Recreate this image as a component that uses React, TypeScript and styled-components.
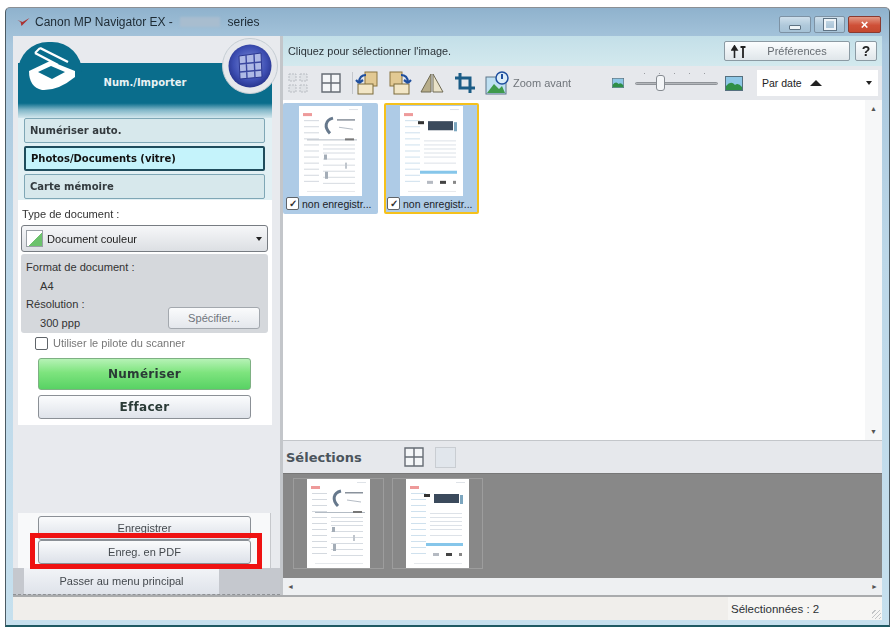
import React from 'react';
import styled, { createGlobalStyle } from 'styled-components';

const GlobalStyle = createGlobalStyle`
  html, body { margin: 0; padding: 0; background: #fff; }
  body { width: 895px; height: 631px; overflow: hidden; font-family: "Liberation Sans", Arial, sans-serif; }
`;

const PageIcon: React.FC<{ kind: 'a' | 'b' }> = ({ kind }) => (
  <svg width="100%" height="100%" viewBox="0 0 63 89" preserveAspectRatio="none">
    <rect width="63" height="89" fill="#fff" />
    <rect x="4" y="7" width="9" height="3" fill="#ee9a9a" />
    <rect x="50" y="3" width="9" height="1" fill="#dfe3e8" />
    {[14, 20, 26, 32, 38, 44, 50, 56, 62, 68, 74].map((y) => (
      <rect key={y} x="5" y={y} width="15" height="1" fill={kind === 'a' ? '#d4d9df' : '#cfe1ee'} />
    ))}
    {kind === 'a' ? (
      <>
        <path d="M34 12 C26 14 25 21 31 27" stroke="#66788c" strokeWidth="3" fill="none" />
        <rect x="38" y="13" width="18" height="1.5" fill="#8a929c" />
        <path d="M40 21 L54 23" stroke="#b5bcc5" strokeWidth="1" />
        <rect x="8" y="33" width="50" height="1" fill="#b3bbc4" />
        <rect x="46" y="32" width="9" height="2" fill="#777" />
        {[38, 42, 46, 52, 58, 64, 70, 76].map((y) => (
          <rect key={y} x="24" y={y} width="32" height="1" fill="#d7dce2" />
        ))}
        <rect x="25" y="48" width="3" height="5" fill="#a4adb7" />
        <rect x="26" y="65" width="3" height="7" fill="#a4adb7" />
        <rect x="46" y="56" width="2" height="6" fill="#c0c6cd" />
      </>
    ) : (
      <>
        <rect x="18" y="15" width="6" height="3" fill="#333" />
        <rect x="28" y="15" width="25" height="9" fill="#3b4a5c" />
        <rect x="54" y="16" width="3" height="9" fill="#7ca6bf" />
        <rect x="20" y="64" width="37" height="3" fill="#86c6ea" />
        <rect x="27" y="74" width="6" height="3" fill="#b5bac2" />
        <rect x="40" y="74" width="6" height="3" fill="#444" />
        <rect x="53" y="74" width="3" height="3" fill="#888" />
        {[34, 38, 42, 46, 50, 56].map((y) => (
          <rect key={y} x="24" y={y} width="32" height="1" fill="#dde2e8" />
        ))}
      </>
    )}
    <rect x="8" y="84" width="48" height="1" fill="#e6e9ec" />
  </svg>
);

const ScannerLogo = () => (
  <svg width="50" height="46" viewBox="0 0 50 46">
    <path d="M1 24 L22 14 L47 24 L47 30 Q30 44 14 43 Q1 40 1 24Z" fill="#fff" />
    <path d="M10 25 L23 19 L37 25 L24 32Z" fill="#0a6d8c" />
    <path d="M12 1 L40 15 M7 6 L30 18" stroke="#fff" strokeWidth="2.4" />
    <path d="M12 1 L7 6" stroke="#fff" strokeWidth="2" />
  </svg>
);

const GridBall = () => (
  <svg width="44" height="44" viewBox="0 0 44 44">
    <defs>
      <radialGradient id="ball" cx="50%" cy="45%" r="55%">
        <stop offset="0%" stopColor="#7f8fd8" />
        <stop offset="70%" stopColor="#3f50b4" />
        <stop offset="100%" stopColor="#28358f" />
      </radialGradient>
    </defs>
    <circle cx="22" cy="22" r="21.5" fill="url(#ball)" />
    <path d="M11 12 L33 9 L34 33 L12 35Z" fill="#aeb9e6" stroke="#2b3790" />
    <path d="M11.5 20 L33 18 M12 28 L34 26 M18 11 L19 34 M26 10 L27 34" stroke="#3a47a0" strokeWidth="1.4" />
  </svg>
);

const PrefArrows = () => (
  <svg width="16" height="13" viewBox="0 0 16 13">
    <path d="M3.5 13V3M1 5l2.5-4L6 5z" fill="#222" stroke="#222" strokeWidth="1.6" />
    <path d="M12 13V3M9.5 2h5" fill="none" stroke="#222" strokeWidth="1.8" />
  </svg>
);

const ToolIcon: React.FC<{ kind: string }> = ({ kind }) => {
  switch (kind) {
    case 'gridOff':
      return (
        <svg width="20" height="20" viewBox="0 0 20 20">
          <path d="M1 1h7v7H1zM12 1h7v7h-7zM1 12h7v7H1zM12 12h7v7h-7z" fill="#dfe2e6" stroke="#b9bdc3" strokeDasharray="2 1" />
        </svg>
      );
    case 'grid':
      return (
        <svg width="20" height="20" viewBox="0 0 20 20">
          <path d="M1 1h18v18H1zM10 1v18M1 10h18" fill="#f4f6f8" stroke="#666c74" strokeWidth="1.4" />
        </svg>
      );
    case 'rotL':
      return (
        <svg width="24" height="24" viewBox="0 0 24 24">
          <rect x="10" y="1" width="12" height="14" fill="#e2c993" stroke="#8a7440" />
          <rect x="3" y="13" width="15" height="10" fill="#f2e6c6" stroke="#7b6a3a" />
          <path d="M4 12 C4 6 7 4 11 4 M4 12 L1 9 M4 12 L8 9" stroke="#1f4f9e" strokeWidth="2.2" fill="none" />
        </svg>
      );
    case 'rotR':
      return (
        <svg width="24" height="24" viewBox="0 0 24 24">
          <rect x="2" y="1" width="12" height="14" fill="#e2c993" stroke="#8a7440" />
          <rect x="6" y="13" width="15" height="10" fill="#f2e6c6" stroke="#7b6a3a" />
          <path d="M20 12 C20 6 17 4 13 4 M20 12 L23 9 M20 12 L16 9" stroke="#1f4f9e" strokeWidth="2.2" fill="none" />
        </svg>
      );
    case 'mirror':
      return (
        <svg width="24" height="20" viewBox="0 0 24 20">
          <path d="M11 1 L1 19 H11Z" fill="#b7ad8a" stroke="#6f6a54" />
          <path d="M13 1 L23 19 H13Z" fill="#e9e2c8" stroke="#6f6a54" />
        </svg>
      );
    case 'crop':
      return (
        <svg width="22" height="22" viewBox="0 0 22 22">
          <path d="M6 1v15h15M1 6h15v15" fill="none" stroke="#1b5c86" strokeWidth="3" />
        </svg>
      );
    default:
      return (
        <svg width="24" height="24" viewBox="0 0 24 24">
          <rect x="1" y="6" width="20" height="17" fill="#bfe0f2" stroke="#5c7488" />
          <path d="M2 22 L9 13 L14 18 L17 15 L20 22Z" fill="#3f9a4c" />
          <circle cx="17" cy="7" r="6" fill="#dcecf8" stroke="#1f4f9e" strokeWidth="1.5" />
          <path d="M17 3v5" stroke="#1f4f9e" strokeWidth="2" />
        </svg>
      );
  }
};

const Landscape: React.FC<{ w: number; h: number }> = ({ w, h }) => (
  <svg width={w} height={h} viewBox="0 0 18 15">
    <rect x=".5" y=".5" width="17" height="14" fill="#8ec7e6" stroke="#55707f" />
    <path d="M1 14 L1 10 Q6 4 10 9 Q13 6 17 11 L17 14Z" fill="#2f8f47" />
  </svg>
);

const Window = styled.div`
  position: relative;
  box-sizing: border-box;
  width: 885px;
  height: 620px;
  margin: 7px 0 0 5px;
  padding: 0 7px 5px 7px;
  display: flex;
  flex-direction: column;
  border: 1px solid #4b5a63;
  border-top-color: #8b8f94;
  border-bottom: 2px solid #1f5a63;
  border-radius: 5px 5px 0 0;
  background: linear-gradient(180deg, #8fb2cd 0%, #a9c7dd 6%, #bcd7e8 40%, #c6e0ee 100%);
  filter: blur(0.7px);
`;

const TitleBar = styled.div`
  height: 28px;
  flex: none;
  display: flex;
  align-items: center;
  justify-content: space-between;
  color: #1d2a33;
  font-size: 12px;
`;

const TitleText = styled.div`
  display: flex;
  align-items: center;
  gap: 4px;
  padding: 0 0 0 3px;
  white-space: pre;
`;

const Redacted = styled.span`
  display: inline-block;
  width: 40px;
  height: 10px;
  background: #a8bdcf;
  filter: blur(1px);
`;

const WinButtons = styled.div`
  display: flex;
  gap: 3px;
  margin: 5px 1px 0 0;
`;

const WinButton = styled.div<{ $close?: boolean; $w: number }>`
  width: ${(p) => p.$w}px;
  height: 17px;
  box-sizing: border-box;
  border: 1px solid ${(p) => (p.$close ? '#8a3a30' : '#7d92a4')};
  border-radius: 2px;
  background: ${(p) =>
    p.$close
      ? 'linear-gradient(180deg, #e39a86 0%, #cf5038 55%, #c4492f 100%)'
      : 'linear-gradient(180deg, #cfe0ec 0%, #b0c9db 55%, #a6c2d6 100%)'};
  display: flex;
  align-items: center;
  justify-content: center;
  color: #fff;
  font-size: 13px;
  font-weight: bold;
  line-height: 1;
`;

const MinGlyph = styled.span`
  width: 10px;
  height: 3px;
  margin-top: 5px;
  background: #eef4f8;
  border: 1px solid #5e7384;
  border-radius: 1px;
`;

const MaxGlyph = styled.span`
  width: 8px;
  height: 7px;
  border: 2px solid #eef4f8;
  outline: 1px solid #5e7384;
`;

const Body = styled.div`
  flex: 1;
  min-height: 0;
  display: grid;
  grid-template-columns: 267px 1fr;
  column-gap: 3px;
  background: #c3c6ca;
  border-bottom: 2px solid #a9abad;
`;

const Sidebar = styled.div`
  display: flex;
  flex-direction: column;
  background: #e8eaee;
  min-height: 0;
`;

const ModeHeader = styled.div`
  position: relative;
  height: 82px;
  flex: none;
  margin-left: 5px;
  margin-right: 8px;
  display: flex;
  flex-direction: column;
  justify-content: flex-end;
`;

const HeaderTab = styled.div`
  position: absolute;
  left: 0;
  top: 6px;
  width: 64px;
  height: 30px;
  background: #0a6d8c;
  border-radius: 32px 32px 0 0;
`;

const HeaderBand = styled.div`
  height: 55px;
  display: flex;
  align-items: flex-start;
  justify-content: center;
  padding-top: 14px;
  box-sizing: border-box;
  background: linear-gradient(180deg, #0a6d8c 0%, #0a6d8c 73%, #7fb5c7 85%, #d3e7ed 100%);
  color: #e8f2f5;
  font: bold 10px "DejaVu Sans", Verdana, sans-serif;
`;

const LogoSlot = styled.div`
  position: absolute;
  left: 10px;
  top: 11px;
`;

const BallRing = styled.div`
  position: absolute;
  right: -6px;
  top: 2px;
  width: 56px;
  height: 56px;
  box-sizing: border-box;
  border-radius: 50%;
  background: #e6e8ec;
  border: 1px solid #c4ccd2;
  display: flex;
  align-items: center;
  justify-content: center;
`;

const ModeList = styled.div`
  flex: none;
  height: 82px;
  margin-left: 5px;
  margin-right: 8px;
  box-sizing: border-box;
  padding: 0 7px 0 6px;
  display: flex;
  flex-direction: column;
  gap: 3px;
  background: #e2f0f4;
`;

const ModeButton = styled.div<{ $active?: boolean }>`
  height: 25px;
  box-sizing: border-box;
  display: flex;
  align-items: center;
  padding-left: 5px;
  border: ${(p) => (p.$active ? '2px solid #1f4c5c' : '1px solid #7fa7b6')};
  border-radius: 2px;
  background: ${(p) => (p.$active ? '#c5f3fb' : '#d7e8ec')};
  color: ${(p) => (p.$active ? '#111' : '#333a3e')};
  font: bold 10px "DejaVu Sans", Verdana, sans-serif;
`;

const ScanPanel = styled.div`
  flex: none;
  height: 225px;
  margin: 0 8px 0 5px;
  box-sizing: border-box;
  background: #fff;
  padding: 7px 4px 0 3px;
  display: flex;
  flex-direction: column;
  font-size: 11.1px;
  color: #333;
`;

const FieldLabel = styled.div`
  height: 18px;
  line-height: 14px;
  padding-left: 1px;
`;

const SelectBox = styled.div`
  height: 27px;
  flex: none;
  box-sizing: border-box;
  display: flex;
  align-items: center;
  gap: 4px;
  padding: 0 5px 0 4px;
  border: 1px solid #777c82;
  border-radius: 3px;
  background: linear-gradient(180deg, #f6f7f9 0%, #dcdfe3 100%);
  color: #222;
`;

const DocIcon = styled.span`
  width: 17px;
  height: 17px;
  box-sizing: border-box;
  border: 1px solid #9aa0a6;
  background: linear-gradient(135deg, #fff 55%, #6cc26c 55%);
`;

const Caret = styled.span`
  margin-left: auto;
  width: 0;
  height: 0;
  border-left: 3px solid transparent;
  border-right: 3px solid transparent;
  border-top: 4px solid #222;
`;

const SettingsBox = styled.div`
  position: relative;
  margin-top: 2px;
  height: 79px;
  flex: none;
  box-sizing: border-box;
  padding: 4px 4px 0 5px;
  background: #d5d8dc;
  border-radius: 3px;
  line-height: 18.5px;
`;

const Indented = styled.div`
  padding-left: 14px;
`;

const SmallButton = styled.div`
  position: absolute;
  right: 8px;
  bottom: 4px;
  width: 90px;
  height: 20px;
  display: flex;
  align-items: center;
  justify-content: center;
  border: 1px solid #a3a8ae;
  border-radius: 3px;
  background: linear-gradient(180deg, #fafbfc 0%, #e4e7ec 100%);
  color: #6f757c;
`;

const CheckRow = styled.div`
  display: flex;
  align-items: center;
  gap: 5px;
  height: 20px;
  flex: none;
  padding-left: 14px;
  color: #777;
  font-size: 11px;
`;

const CheckBox = styled.span`
  flex: none;
  width: 13px;
  height: 13px;
  box-sizing: border-box;
  border: 1px solid #5f6469;
  border-radius: 2px;
  background: #fff;
  color: #333;
  font-size: 10px;
  line-height: 11px;
  text-align: center;
  font-weight: bold;
`;

const ActionButton = styled.div<{ $primary?: boolean }>`
  margin: 5px 17px 0 17px;
  height: ${(p) => (p.$primary ? 32 : 24)}px;
  flex: none;
  box-sizing: border-box;
  display: flex;
  align-items: center;
  justify-content: center;
  border: 1px solid ${(p) => (p.$primary ? '#7eb083' : '#8b9096')};
  border-radius: 3px;
  background: ${(p) =>
    p.$primary
      ? 'linear-gradient(180deg, #b6f2b6 0%, #7ee47e 45%, #58d264 100%)'
      : 'linear-gradient(180deg, #fbfcfd 0%, #dfe3ea 100%)'};
  color: #2a3a36;
  font: bold 12px "DejaVu Sans", Verdana, sans-serif;
  letter-spacing: 0.3px;
`;

const Spacer = styled.div`
  flex: 1;
`;

const SavePanel = styled.div`
  flex: none;
  height: 55px;
  margin: 0 9px 0 5px;
  box-sizing: border-box;
  padding: 3px 19px 0 20px;
  background: #f8f9fa;
  border-right: 1px solid #c6c8cc;
  display: flex;
  flex-direction: column;
`;

const SaveButton = styled.div`
  height: 24px;
  flex: none;
  box-sizing: border-box;
  display: flex;
  align-items: center;
  justify-content: center;
  padding-bottom: 1px;
  border: 1px solid #8b9096;
  border-radius: 3px;
  background: linear-gradient(180deg, #fafbfc 0%, #dde1e9 100%);
  color: #44494e;
  font-size: 11px;
`;

const Highlight = styled.div`
  position: absolute;
  left: 24px;
  top: 525px;
  width: 232px;
  height: 36px;
  box-sizing: border-box;
  border: 5px solid #ef1212;
`;

const MenuStrip = styled.div`
  flex: none;
  height: 27px;
  box-sizing: border-box;
  background: #c5c8ce;
  padding-left: 11px;
  border-bottom: 1px dashed #8f9296;
`;

const MenuTab = styled.div`
  width: 195px;
  height: 100%;
  display: flex;
  align-items: center;
  justify-content: center;
  background: linear-gradient(180deg, #f2f4f7 0%, #dfe3ea 100%);
  color: #44494e;
  font-size: 11px;
`;

const Main = styled.div`
  display: flex;
  flex-direction: column;
  min-width: 0;
  min-height: 0;
`;

const HintBar = styled.div`
  flex: none;
  height: 30px;
  display: flex;
  align-items: center;
  padding: 0 5px;
  background: linear-gradient(180deg, #c3dfe8 0%, #d3e9ee 100%);
  color: #2b3338;
  font-size: 10.9px;
`;

const PrefButton = styled.div<{ $w: number; $push?: boolean }>`
  width: ${(p) => p.$w}px;
  height: 20px;
  box-sizing: border-box;
  display: flex;
  align-items: center;
  justify-content: center;
  position: relative;
  margin-left: ${(p) => (p.$push ? 'auto' : '5px')};
  padding-left: ${(p) => (p.$push ? 20 : 0)}px;
  border: 1px solid #8b9aa3;
  border-radius: 2px;
  background: linear-gradient(180deg, #fbfdfe 0%, #e0e6ea 100%);
  color: #666c72;
  font-size: 11px;
`;

const PrefIcon = styled.span`
  position: absolute;
  left: 6px;
  top: 3px;
  display: flex;
`;

const HelpMark = styled.span`
  color: #222;
  font-weight: bold;
  font-size: 14px;
`;

const Toolbar = styled.div`
  flex: none;
  height: 34px;
  display: flex;
  align-items: center;
  background: #e6e8ec;
  color: #70757b;
  font-size: 11px;
  padding-left: 4px;
  white-space: nowrap;
`;

const ToolSlot = styled.div<{ $w: number }>`
  width: ${(p) => p.$w}px;
  flex: none;
  display: flex;
  justify-content: center;
  align-items: center;
`;

const ToolSep = styled.div`
  width: 1px;
  height: 22px;
  background: #c4c7cc;
  flex: none;
`;

const ZoomLabel = styled.span`
  margin-left: 4px;
  width: 61px;
  flex: none;
`;

const SliderGroup = styled.div`
  margin-left: 38px;
  display: flex;
  align-items: center;
  gap: 11px;
  flex: none;
`;

const SliderTrack = styled.div`
  position: relative;
  width: 83px;
  height: 3px;
  margin-right: -4px;
  background: #b4b7bb;
  border: 1px solid #8f9398;
  border-radius: 2px;
  box-sizing: border-box;
  &::before {
    content: '';
    position: absolute;
    left: 8px;
    right: 4px;
    top: -10px;
    height: 1px;
    background: repeating-linear-gradient(90deg, #9a9da2 0 1px, transparent 1px 15px);
  }
`;

const SliderThumb = styled.div`
  position: absolute;
  left: 20px;
  top: -8px;
  width: 9px;
  height: 16px;
  box-sizing: border-box;
  background: #f4f6f8;
  border: 1px solid #868b91;
  border-radius: 3px;
`;

const SortSelect = styled.div`
  margin-left: 14px;
  width: 121px;
  height: 26px;
  flex: none;
  box-sizing: border-box;
  display: flex;
  align-items: center;
  padding: 0 6px 0 5px;
  gap: 8px;
  background: #fff;
  color: #222;
  font-size: 10.5px;
`;

const UpCaret = styled.span`
  width: 0;
  height: 0;
  border-left: 6px solid transparent;
  border-right: 6px solid transparent;
  border-bottom: 6px solid #222;
`;

const ThumbArea = styled.div`
  flex: none;
  height: 340px;
  display: flex;
  background: #fff;
`;

const ThumbGrid = styled.div`
  flex: 1;
  display: flex;
  gap: 6px;
  padding-top: 3px;
  align-items: flex-start;
`;

const Thumb = styled.div<{ $selected?: boolean }>`
  width: 95px;
  height: 111px;
  box-sizing: border-box;
  display: flex;
  flex-direction: column;
  background: #aecbe6;
  border: ${(p) => (p.$selected ? '2px solid #f5c11c' : '2px solid #aecbe6')};
  border-radius: 2px;
`;

const ThumbPage = styled.div`
  width: 63px;
  height: 90px;
  margin: 1px auto 0;
`;

const ThumbCaption = styled.div`
  display: flex;
  align-items: center;
  gap: 3px;
  height: 16px;
  padding: 0 0 0 1px;
  margin-top: auto;
  margin-bottom: 1px;
  color: #1c2226;
  font-size: 10.5px;
  white-space: nowrap;
  overflow: hidden;
`;

const VScroll = styled.div`
  flex: none;
  width: 17px;
  background: #f6f7f8;
  display: flex;
  flex-direction: column;
  justify-content: space-between;
  align-items: center;
  padding: 5px 0;
  box-sizing: border-box;
  color: #555;
  font-size: 7px;
`;

const SelectionHeader = styled.div`
  flex: none;
  height: 32px;
  margin-top: 1px;
  box-sizing: border-box;
  display: flex;
  align-items: center;
  padding-left: 3px;
  background: #e6e8ec;
  color: #4b545c;
  font: bold 13px "DejaVu Sans", Verdana, sans-serif;
`;

const SelectionTools = styled.div`
  margin-left: 42px;
  display: flex;
  gap: 11px;
`;

const EmptyTool = styled.div`
  width: 19px;
  height: 19px;
  background: #e1e6ec;
  border: 1px solid #c9cdd2;
`;

const SelectionStrip = styled.div`
  flex: 1;
  min-height: 0;
  display: flex;
  gap: 8px;
  padding: 4px 0 0 10px;
  background: #888;
  border-top: 1px solid #777;
`;

const SelectionFrame = styled.div`
  width: 91px;
  height: 91px;
  box-sizing: border-box;
  border: 1px solid #9d9d9d;
  display: flex;
  justify-content: center;
  align-items: flex-end;
`;

const SelectionPage = styled.div`
  width: 63px;
  height: 89px;
`;

const HScroll = styled.div`
  flex: none;
  height: 17px;
  display: flex;
  align-items: center;
  justify-content: space-between;
  padding: 0 4px;
  background: #eef0f2;
  color: #555;
  font-size: 7px;
`;

const StatusBar = styled.div`
  flex: none;
  height: 23px;
  display: flex;
  justify-content: flex-end;
  align-items: stretch;
  background: #f0eeeb;
  color: #2c3135;
  font-size: 11.5px;
`;

const StatusCell = styled.div`
  position: relative;
  width: 154px;
  box-sizing: border-box;
  padding-left: 3px;
  display: flex;
  align-items: center;
  background: #f6f5f3;
`;

const ResizeGrip = styled.div`
  position: absolute;
  right: 1px;
  bottom: 1px;
  width: 9px;
  height: 9px;
  background: repeating-linear-gradient(135deg, transparent 0 2px, #c2c4c6 2px 3px);
`;

const App: React.FC = () => (
  <>
    <GlobalStyle />
    <Window>
      <TitleBar>
        <TitleText>
          <svg width="15" height="10" viewBox="0 0 14 10">
            <path d="M1 3 L6 5 L13 1 L8 6 L5 9 L4 5Z" fill="#a33" />
          </svg>
          Canon MP Navigator EX - <Redacted /> series
        </TitleText>
        <WinButtons>
          <WinButton $w={32}><MinGlyph /></WinButton>
          <WinButton $w={31}><MaxGlyph /></WinButton>
          <WinButton $w={33} $close>×</WinButton>
        </WinButtons>
      </TitleBar>

      <Body>
        <Sidebar>
          <ModeHeader>
            <HeaderTab />
            <HeaderBand>Num./Importer</HeaderBand>
            <LogoSlot><ScannerLogo /></LogoSlot>
            <BallRing><GridBall /></BallRing>
          </ModeHeader>
          <ModeList>
            <ModeButton>Numériser auto.</ModeButton>
            <ModeButton $active>Photos/Documents (vitre)</ModeButton>
            <ModeButton>Carte mémoire</ModeButton>
          </ModeList>
          <ScanPanel>
            <FieldLabel>Type de document :</FieldLabel>
            <SelectBox>
              <DocIcon />
              Document couleur
              <Caret />
            </SelectBox>
            <SettingsBox>
              <div>Format de document :</div>
              <Indented>A4</Indented>
              <div>Résolution :</div>
              <Indented>300 ppp</Indented>
              <SmallButton>Spécifier...</SmallButton>
            </SettingsBox>
            <CheckRow>
              <CheckBox />
              Utiliser le pilote du scanner
            </CheckRow>
            <ActionButton $primary>Numériser</ActionButton>
            <ActionButton>Effacer</ActionButton>
          </ScanPanel>
          <Spacer />
          <SavePanel>
            <SaveButton>Enregistrer</SaveButton>
            <SaveButton>Enreg. en PDF</SaveButton>
          </SavePanel>
          <MenuStrip>
            <MenuTab>Passer au menu principal</MenuTab>
          </MenuStrip>
        </Sidebar>

        <Main>
          <HintBar>
            Cliquez pour sélectionner l'image.
            <PrefButton $w={126} $push>
              <PrefIcon><PrefArrows /></PrefIcon>
              Préférences
            </PrefButton>
            <PrefButton $w={22}><HelpMark>?</HelpMark></PrefButton>
          </HintBar>
          <Toolbar>
            <ToolSlot $w={22}><ToolIcon kind="gridOff" /></ToolSlot>
            <ToolSlot $w={43}><ToolIcon kind="grid" /></ToolSlot>
            <ToolSep />
            <ToolSlot $w={28}><ToolIcon kind="rotL" /></ToolSlot>
            <ToolSlot $w={38}><ToolIcon kind="rotR" /></ToolSlot>
            <ToolSlot $w={26}><ToolIcon kind="mirror" /></ToolSlot>
            <ToolSlot $w={40}><ToolIcon kind="crop" /></ToolSlot>
            <ToolSlot $w={24}><ToolIcon kind="zoom" /></ToolSlot>
            <ZoomLabel>Zoom avant</ZoomLabel>
            <SliderGroup>
              <Landscape w={12} h={10} />
              <SliderTrack><SliderThumb /></SliderTrack>
              <Landscape w={18} h={15} />
            </SliderGroup>
            <SortSelect>
              Par date
              <UpCaret />
              <Caret />
            </SortSelect>
          </Toolbar>
          <ThumbArea>
            <ThumbGrid>
              <Thumb>
                <ThumbPage><PageIcon kind="a" /></ThumbPage>
                <ThumbCaption><CheckBox>✓</CheckBox>non enregistr...</ThumbCaption>
              </Thumb>
              <Thumb $selected>
                <ThumbPage><PageIcon kind="b" /></ThumbPage>
                <ThumbCaption><CheckBox>✓</CheckBox>non enregistr...</ThumbCaption>
              </Thumb>
            </ThumbGrid>
            <VScroll><span>▲</span><span>▼</span></VScroll>
          </ThumbArea>
          <SelectionHeader>
            Sélections
            <SelectionTools>
              <ToolIcon kind="grid" />
              <EmptyTool />
            </SelectionTools>
          </SelectionHeader>
          <SelectionStrip>
            <SelectionFrame><SelectionPage><PageIcon kind="a" /></SelectionPage></SelectionFrame>
            <SelectionFrame><SelectionPage><PageIcon kind="b" /></SelectionPage></SelectionFrame>
          </SelectionStrip>
          <HScroll><span>◄</span><span>►</span></HScroll>
        </Main>
      </Body>

      <StatusBar>
        <StatusCell>
          Sélectionnées : 2
          <ResizeGrip />
        </StatusCell>
      </StatusBar>
      <Highlight />
    </Window>
  </>
);

export default App;
